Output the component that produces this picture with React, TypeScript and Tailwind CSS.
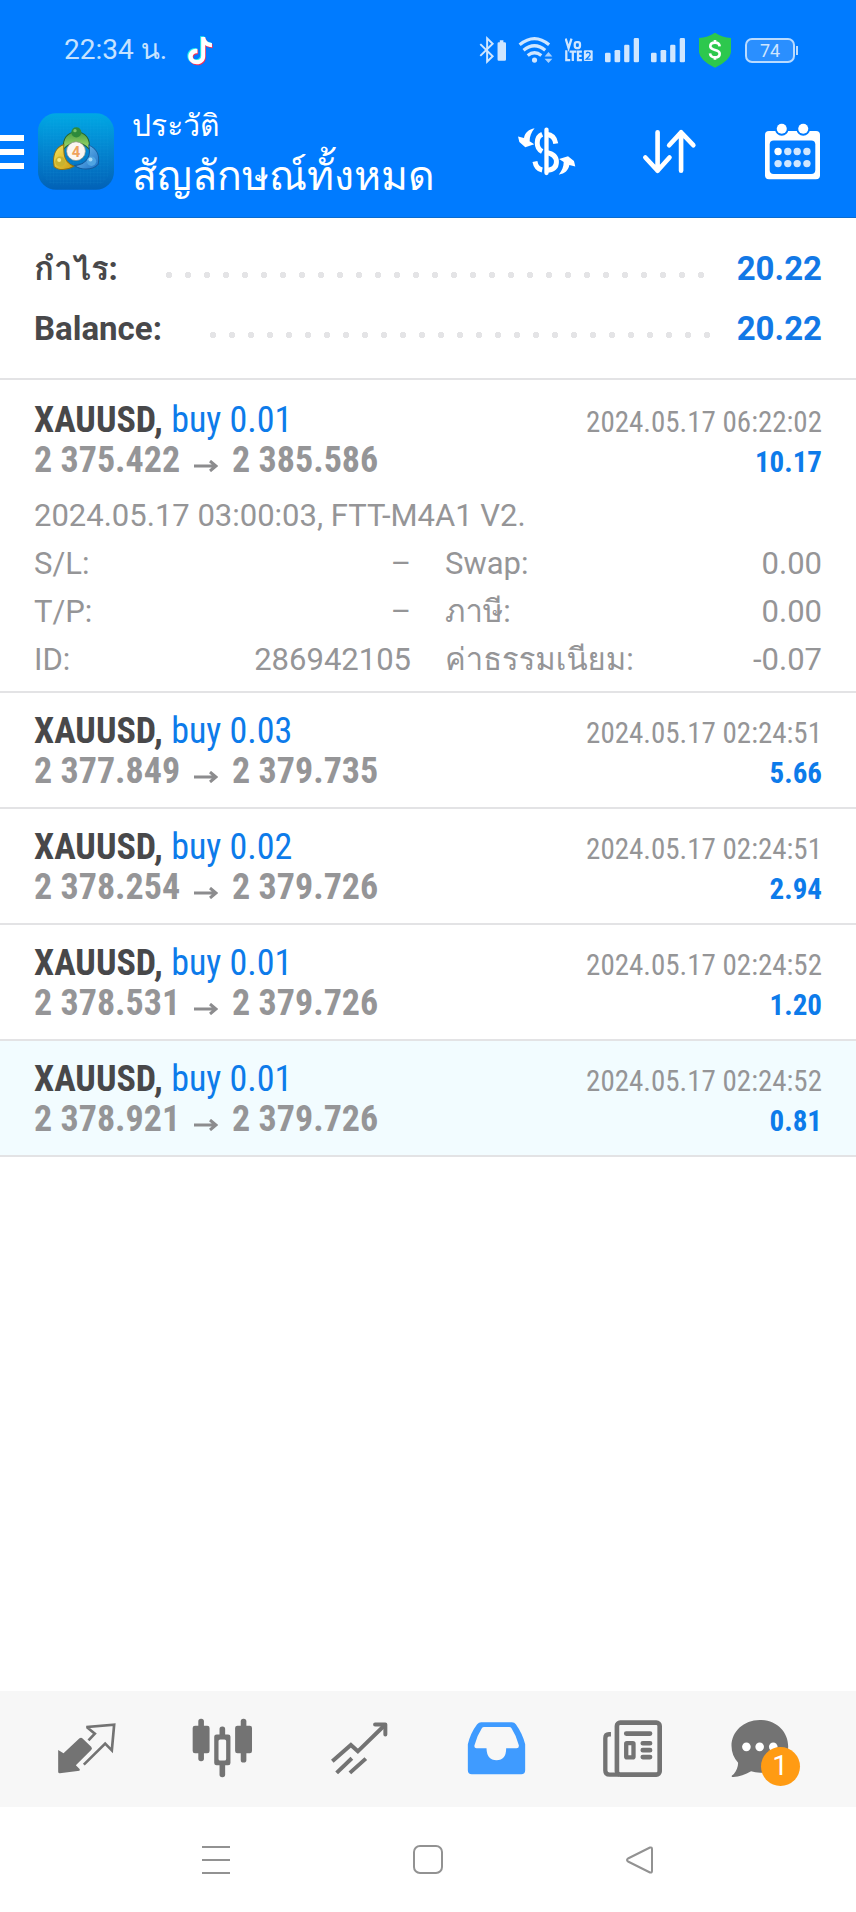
import type { ReactNode } from "react";

const CONDENSED = "font-['Roboto_Condensed','Liberation_Sans_Narrow',Roboto,sans-serif]";

type Trade = {
  symbol: string;
  side: string;
  open: string;
  close: string;
  time: string;
  profit: string;
  highlighted?: boolean;
  comment?: string;
  details?: { label: string; value: string }[];
};

const trades: Trade[] = [
  {
    symbol: "XAUUSD,",
    side: "buy 0.01",
    open: "2 375.422",
    close: "2 385.586",
    time: "2024.05.17 06:22:02",
    profit: "10.17",
    comment: "2024.05.17 03:00:03, FTT-M4A1 V2.",
    details: [
      { label: "S/L:", value: "–" },
      { label: "Swap:", value: "0.00" },
      { label: "T/P:", value: "–" },
      { label: "ภาษี:", value: "0.00" },
      { label: "ID:", value: "286942105" },
      { label: "ค่าธรรมเนียม:", value: "-0.07" },
    ],
  },
  { symbol: "XAUUSD,", side: "buy 0.03", open: "2 377.849", close: "2 379.735", time: "2024.05.17 02:24:51", profit: "5.66" },
  { symbol: "XAUUSD,", side: "buy 0.02", open: "2 378.254", close: "2 379.726", time: "2024.05.17 02:24:51", profit: "2.94" },
  { symbol: "XAUUSD,", side: "buy 0.01", open: "2 378.531", close: "2 379.726", time: "2024.05.17 02:24:52", profit: "1.20" },
  { symbol: "XAUUSD,", side: "buy 0.01", open: "2 378.921", close: "2 379.726", time: "2024.05.17 02:24:52", profit: "0.81", highlighted: true },
];

function TikTokIcon() {
  const note = "M602 108h12c1 10 8 17 20 18v12c-8 0-15-2-20-6v33c0 14-11 24-25 24s-25-10-25-23 11-24 27-23v13c-8-1-14 3-14 10 0 6 5 10 12 10 8 0 13-5 13-12z";
  return (
    <svg viewBox="560 102 80 92" className="h-[31px] w-[27px]" aria-hidden="true">
      <path d={note} fill="#25f4ee" transform="translate(-3 -2)" />
      <path d={note} fill="#fe2c55" transform="translate(2 3)" />
      <path d={note} fill="#fff" />
    </svg>
  );
}

function BluetoothIcon() {
  return (
    <svg viewBox="149 102 83 90" className="h-[30px] w-[27px]" aria-hidden="true">
      <path d="M153 129l38 37-17 17v-72l17 17-38 37" fill="none" stroke="#cfe6ff" strokeWidth="6" />
      <path d="M213 117h11v6h4q4 0 4 4v49q0 4-4 4h-18q-4 0-4-4v-49q0-4 4-4h3z" fill="#cfe6ff" />
    </svg>
  );
}

function WifiIcon() {
  return (
    <svg viewBox="266 102 108 88" className="h-[30px] w-[35px]" aria-hidden="true">
      <g fill="none" stroke="#cfe6ff" strokeWidth="10">
        <path d="M271 130q46-38 91 0" />
        <path d="M283 147q34-28 67 0" />
        <path d="M296 163q21-17 42 0" />
      </g>
      <circle cx="317" cy="177" r="8" fill="#cfe6ff" />
      <path d="M360 152l12 14h-24zM360 186l12-13h-24z" fill="#a5d0ff" />
    </svg>
  );
}

function VolteIcon() {
  return (
    <svg viewBox="407 106 86 82" className="h-[28px] w-[28px]" aria-hidden="true">
      <g fill="none" stroke="#cfe6ff" strokeWidth="7">
        <path d="M409 112l9 29 9-29" />
        <rect x="437" y="123" width="16" height="18" rx="6" />
        <path d="M411 148v30h12M421 152h21M431 152v29M459 152h-12v26h12M447 165h11" />
      </g>
      <rect x="465" y="148" width="27" height="33" rx="3" fill="#cfe6ff" />
      <path d="M472 158q2-5 7-4 6 1 5 7-1 4-12 14h14" fill="none" stroke="#007bff" strokeWidth="4" />
    </svg>
  );
}

function SignalIcon() {
  return (
    <svg viewBox="527 106 103 82" className="h-[28px] w-[34px]" fill="#cfe6ff" aria-hidden="true">
      <rect x="527" y="155" width="17" height="29" rx="4" />
      <rect x="556" y="147" width="17" height="37" rx="4" />
      <rect x="585" y="131" width="16" height="53" rx="4" />
      <rect x="614" y="111" width="16" height="73" rx="4" />
    </svg>
  );
}

function ShieldIcon() {
  return (
    <svg viewBox="801 94 108 108" className="h-9 w-9" aria-hidden="true">
      <path d="M855 96q22 14 48 16v43q-3 26-48 46-45-20-48-46v-43q26-2 48-16z" fill="#2dc84d" />
      <path d="M869 137c-1-8-7-11-14-11-8 0-14 4-14 11 0 15 28 7 28 22 0 7-6 11-14 11-9 0-14-5-15-12M855 118v11M855 167v10" fill="none" stroke="#fff" strokeWidth="8" />
    </svg>
  );
}

function BatteryStatus() {
  return (
    <div className="flex items-center gap-px">
      <div className="flex h-[25px] w-[50px] items-center justify-center rounded-[7px] border-2 border-[#b9dbff] bg-[#2a8fff] text-[18px] text-[#cfe6ff]">74</div>
      <div className="h-[9px] w-[2px] bg-[#b9dbff]" />
    </div>
  );
}

function AppLogo() {
  return (
    <svg viewBox="25 25 226 228" className="h-[77px] w-[76px] shrink-0" role="img" aria-label="MetaTrader 4">
      <defs>
        <linearGradient id="tile" x1="0" y1="0" x2="0" y2="1">
          <stop offset="0" stopColor="#00a8e4" />
          <stop offset="0.5" stopColor="#0383cf" />
          <stop offset="1" stopColor="#0261b6" />
        </linearGradient>
        <linearGradient id="green" x1="0" y1="0" x2="0" y2="1">
          <stop offset="0" stopColor="#4b9f45" />
          <stop offset="1" stopColor="#a4dc6c" />
        </linearGradient>
        <linearGradient id="yellow" x1="0" y1="0" x2="1" y2="1">
          <stop offset="0" stopColor="#f8e65c" />
          <stop offset="1" stopColor="#c99a12" />
        </linearGradient>
        <linearGradient id="blue" x1="0" y1="0" x2="1" y2="1">
          <stop offset="0" stopColor="#7cc5f2" />
          <stop offset="1" stopColor="#1c72c8" />
        </linearGradient>
        <pattern id="mesh" width="10" height="10" patternUnits="userSpaceOnUse">
          <path d="M0 0H10M0 0V10" stroke="#36b6ee" strokeOpacity="0.3" strokeWidth="1" />
        </pattern>
      </defs>
      <rect x="25" y="25" width="226" height="228" rx="54" fill="url(#tile)" />
      <rect x="40" y="40" width="196" height="198" rx="40" fill="url(#mesh)" />
      <path d="M101 132c-4-32 12-51 38-51s43 19 38 51c-12-14-27-19-38-19s-26 5-38 19z" fill="url(#green)" stroke="#25632f" strokeWidth="3" />
      <path d="M102 118c-24 8-35 32-29 66 12 12 39 12 59-1-17-7-27-20-29-35-1-10-2-20-1-30z" fill="url(#yellow)" stroke="#8c7013" strokeWidth="3" />
      <path d="M176 120c24 10 33 32 28 57-18 20-53 17-70 4 20-2 32-10 39-22 7-12 6-27 3-39z" fill="url(#blue)" stroke="#155a9c" strokeWidth="3" />
      <circle cx="139" cy="82" r="15" fill="#2d8a3c" />
      <circle cx="135" cy="77" r="5" fill="#7cc46c" />
      <circle cx="91" cy="169" r="15" fill="#c9b32f" />
      <circle cx="88" cy="164" r="6" fill="#f6ea86" />
      <circle cx="184" cy="168" r="14" fill="#4fa4e2" />
      <circle cx="181" cy="163" r="6" fill="#a8dcf8" />
      <circle cx="138" cy="138" r="28" fill="#fbf6f2" stroke="#8c8f80" strokeWidth="2" />
      <text x="138" y="154" textAnchor="middle" fontSize="44" fontWeight="700" fontFamily="Roboto, sans-serif" fill="#efa25c">4</text>
    </svg>
  );
}

function CurrencyIcon() {
  return (
    <svg viewBox="262 380 176 148" className="h-[49px] w-[59px]" aria-hidden="true">
      <g fill="none" stroke="#fff" strokeWidth="15">
        <path d="M337 402Q322 408 322 428Q322 446 337 454" />
        <path d="M337 510Q319 506 315 484" />
        <path d="M350 402Q374 404 378 430" />
        <path d="M350 457Q380 462 380 486Q380 510 350 511" />
        <path d="M350 388v131" strokeWidth="13" strokeLinecap="round" />
      </g>
      <path d="M314 384c-17 3-29 13-32 29l-18-4 4 16 18 16 27-9-14-9c0-14 5-27 15-39z" fill="#fff" />
      <path d="M387 524c19-3 29-13 32-29l18 4-4-16-18-15-27 9 14 9c0 14-5 26-15 38z" fill="#fff" />
    </svg>
  );
}

function SortIcon() {
  return (
    <svg viewBox="640 386 164 136" className="h-[45px] w-[55px]" fill="none" stroke="#fff" strokeWidth="14" strokeLinecap="round" strokeLinejoin="round" aria-hidden="true">
      <path d="M686 396v116M649 472l37 40 36-40" />
      <path d="M757 512V396M721 435l36-39 37 39" />
    </svg>
  );
}

function CalendarIcon() {
  return (
    <svg viewBox="1004 366 170 170" className="h-[57px] w-[57px]" aria-hidden="true">
      <rect x="1007" y="390" width="164" height="144" rx="12" fill="#fff" />
      <circle cx="1057" cy="384" r="20" fill="#007bff" />
      <circle cx="1121" cy="384" r="20" fill="#007bff" />
      <circle cx="1057" cy="383" r="15" fill="#fff" />
      <circle cx="1121" cy="383" r="15" fill="#fff" />
      <rect x="1021" y="418" width="136" height="100" rx="12" fill="#007bff" />
      <g fill="#cfe6ff">
        <circle cx="1046" cy="451" r="11" fill="#fff" />
        <circle cx="1075" cy="451" r="11" />
        <circle cx="1103" cy="451" r="11" />
        <circle cx="1132" cy="451" r="11" />
        <circle cx="1046" cy="487" r="11" />
        <circle cx="1075" cy="487" r="11" />
        <circle cx="1103" cy="487" r="11" />
        <circle cx="1132" cy="487" r="11" />
      </g>
    </svg>
  );
}

function QuotesIcon() {
  return (
    <svg viewBox="174 128 176 156" className="h-[52px] w-[59px]" aria-hidden="true">
      <path d="M177 212l16 10 48-45q5-4 10 1l25 24q5 5 0 10l-46 46 12 12-1 4-59 8q-5 0-5-5z" fill="#737373" />
      <path d="M268 183l19-20-22-18v-2l80-7-7 77-20-20-64 63" fill="none" stroke="#737373" strokeWidth="8" />
    </svg>
  );
}

function ChartIcon() {
  return (
    <svg viewBox="578 116 184 180" className="h-[60px] w-[61px]" fill="#737373" aria-hidden="true">
      <rect x="597" y="118" width="17" height="128" rx="8" />
      <rect x="580" y="139" width="51" height="83" rx="7" />
      <rect x="725" y="118" width="17" height="132" rx="8" />
      <rect x="708" y="139" width="51" height="83" rx="7" />
      <rect x="661" y="141" width="17" height="153" rx="8" />
      <rect x="645" y="165" width="49" height="93" rx="7" />
      <rect x="658" y="180" width="23" height="64" rx="5" fill="#f7f7f7" />
    </svg>
  );
}

function TradeIcon() {
  return (
    <svg viewBox="990 122 178 162" className="h-[54px] w-[59px]" fill="none" stroke="#737373" strokeWidth="12" aria-hidden="true">
      <path d="M997 243l56-49 21 19 80-78" />
      <path d="M1126 132h31v30" strokeLinecap="round" strokeLinejoin="round" />
      <path d="M1010 278l46-44M1050 278l48-43" />
    </svg>
  );
}

function HistoryIcon() {
  return (
    <svg viewBox="112 122 176 162" className="h-[54px] w-[59px]" aria-hidden="true">
      <path d="M142 132q5-6 12-6h92q8 0 12 6 20 28 28 60v78q0 12-12 12H126q-12 0-12-12v-78q8-34 28-60z" fill="#3f9bff" />
      <path d="M156 144q2-4 7-4h75q5 0 7 4 15 23 22 51 1 8-7 9h-31q0 36-29 36t-30-36h-30q-8-1-6-9 7-28 22-51z" fill="#f7f7f7" />
    </svg>
  );
}

function NewsIcon() {
  return (
    <svg viewBox="522 114 182 178" className="h-[59px] w-[61px]" fill="none" stroke="#737373" aria-hidden="true">
      <rect x="566" y="125" width="129" height="157" rx="10" strokeWidth="14" />
      <path d="M548 160h-6q-11 0-11 12v97q0 13 13 13h28" strokeWidth="13" />
      <path d="M594 158h72M644 187h22M644 208h22M644 229h22" strokeWidth="14" strokeLinecap="round" />
      <rect x="594" y="187" width="22" height="43" rx="2" strokeWidth="13" />
    </svg>
  );
}

function MessagesIcon() {
  return (
    <svg viewBox="902 114 174 178" className="h-[59px] w-[58px]" aria-hidden="true">
      <path d="M988 117c50 0 86 35 86 80s-37 79-84 79c-10 0-20-2-28-4-18 11-38 18-57 17-4-2 0-5 5-9 8-9 13-22 13-34-13-14-20-31-20-51 0-43 37-78 85-78z" fill="#737373" />
      <circle cx="948" cy="198" r="13" fill="#fff" />
      <circle cx="988" cy="198" r="13" fill="#fff" />
      <circle cx="1029" cy="198" r="13" fill="#fff" />
    </svg>
  );
}

function HeaderButton({ label, children }: { label: string; children: ReactNode }) {
  return (
    <button type="button" aria-label={label} className="flex h-20 w-[123px] items-center justify-center">
      {children}
    </button>
  );
}

function SummaryRow({ label, value }: { label: string; value: string }) {
  return (
    <div className="flex h-[60px] items-center text-[33px] font-bold">
      <span className="text-[#48484a]">{label}</span>
      <span className="mr-[26px] ml-12 mt-3 h-[6px] flex-1 bg-[radial-gradient(circle_at_3px_3px,#e4e4e6_3px,transparent_3px)] bg-[length:19px_6px] bg-repeat-x" />
      <span className="text-[#1278e6]">{value}</span>
    </div>
  );
}

function TradeRow({ trade }: { trade: Trade }) {
  return (
    <li className={`border-b-2 border-[#e3e3e5] px-[34px] ${trade.highlighted ? "bg-[#f2fcff]" : ""} ${trade.details ? "pt-[20px]" : "pt-[18px]"}`}>
      <div className={`flex justify-between ${CONDENSED}`}>
        <div className="text-[36px] leading-[40px]">
          <div>
            <span className="font-bold text-[#48484a]">{trade.symbol}</span> <span className="text-[#0d7bea]">{trade.side}</span>
          </div>
          <div className="flex items-center font-bold text-[#959597]">
            {trade.open}
            <svg viewBox="0 0 24 12" className="mx-[14px] mt-3 h-3 w-6" fill="none" stroke="#8c8c8e" strokeWidth="3" aria-hidden="true">
              <path d="M0 6h22M16 1l6 5-6 5" />
            </svg>
            {trade.close}
          </div>
        </div>
        <div className="pt-[2px] text-right text-[29px] leading-[40px]">
          <div className="text-[#959597]">{trade.time}</div>
          <div className="font-bold text-[#0d7bea]">{trade.profit}</div>
        </div>
      </div>
      {trade.details ? (
        <div className="pt-[10px] pb-[7px] text-[31px] leading-[48px] text-[#959597]">
          <p>{trade.comment}</p>
          <dl className="grid grid-cols-2 gap-x-[34px]">
            {trade.details.map((item) => (
              <div key={item.label} className="flex justify-between">
                <dt>{item.label}</dt>
                <dd>{item.value}</dd>
              </div>
            ))}
          </dl>
        </div>
      ) : (
        <div className="h-[14px]" />
      )}
    </li>
  );
}

export default function App() {
  return (
    <div className="flex min-h-screen flex-col bg-white font-[Roboto,Loma,'Noto_Sans_Thai_Looped','Noto_Sans',sans-serif]">
      <header className="border-b border-[#0a6cd0] bg-[#007bff] pb-[14px] text-white">
        <div className="flex h-[100px] items-center justify-between pr-[58px] pl-16">
          <div className="flex items-center gap-5 text-[28px] text-[#c5e2ff]">
            <span>22:34 น.</span>
            <TikTokIcon />
          </div>
          <div className="flex items-center gap-3">
            <BluetoothIcon />
            <WifiIcon />
            <VolteIcon />
            <SignalIcon />
            <SignalIcon />
            <ShieldIcon />
            <BatteryStatus />
          </div>
        </div>
        <div className="flex h-[103px] items-center pr-[2px]">
          <button type="button" aria-label="Menu" className="mr-[14px] flex w-6 flex-col gap-2">
            <span className="h-[6px] bg-white" />
            <span className="h-[6px] bg-white" />
            <span className="h-[6px] bg-white" />
          </button>
          <AppLogo />
          <div className="ml-[18px] flex-1">
            <p className="text-[30px] leading-[48px]">ประวัติ</p>
            <h1 className="text-[41px] leading-[52px]">สัญลักษณ์ทั้งหมด</h1>
          </div>
          <HeaderButton label="Symbol">
            <CurrencyIcon />
          </HeaderButton>
          <HeaderButton label="Sort">
            <SortIcon />
          </HeaderButton>
          <HeaderButton label="Period">
            <CalendarIcon />
          </HeaderButton>
        </div>
      </header>

      <main className="flex-1">
        <section className="border-b-2 border-[#e3e3e5] px-[34px] pt-[21px] pb-[19px]">
          <SummaryRow label="กำไร:" value="20.22" />
          <SummaryRow label="Balance:" value="20.22" />
        </section>
        <ul>
          {trades.map((trade) => (
            <TradeRow key={trade.open} trade={trade} />
          ))}
        </ul>
      </main>

      <nav className="grid h-[116px] grid-cols-6 bg-[#f7f7f7] px-[18px] pb-[2px]">
        <button type="button" aria-label="Quotes" className="flex items-center justify-center">
          <QuotesIcon />
        </button>
        <button type="button" aria-label="Chart" className="flex items-center justify-center">
          <ChartIcon />
        </button>
        <button type="button" aria-label="Trade" className="flex items-center justify-center">
          <TradeIcon />
        </button>
        <button type="button" aria-label="History" className="flex items-center justify-center">
          <HistoryIcon />
        </button>
        <button type="button" aria-label="News" className="flex items-center justify-center">
          <NewsIcon />
        </button>
        <button type="button" aria-label="Messages" className="flex items-center justify-center">
          <span className="relative mr-5">
            <MessagesIcon />
            <span className="absolute -right-[11px] -bottom-2 flex size-[39px] items-center justify-center rounded-full bg-[#ff9b13] text-[28px] text-white">1</span>
          </span>
        </button>
      </nav>

      <div className="grid h-[105px] grid-cols-3 px-[110px]">
        <button type="button" aria-label="Recent apps" className="flex items-center justify-center">
          <svg viewBox="0 0 30 30" className="size-[30px]" stroke="#929292" strokeWidth="2" aria-hidden="true">
            <path d="M1 2h28M1 15h28M1 28h28" />
          </svg>
        </button>
        <button type="button" aria-label="Home" className="flex items-center justify-center">
          <svg viewBox="0 0 30 30" className="size-[30px]" fill="none" stroke="#929292" strokeWidth="2" aria-hidden="true">
            <rect x="1" y="1" width="28" height="27" rx="6" />
          </svg>
        </button>
        <button type="button" aria-label="Back" className="flex items-center justify-center">
          <svg viewBox="0 0 30 30" className="size-[30px]" fill="none" stroke="#929292" strokeWidth="2" strokeLinejoin="round" aria-hidden="true">
            <path d="M3 13.500Q1 15 3 16.500L25 27.500Q27 28 27 26V4Q27 2 25 2.500Z" />
          </svg>
        </button>
      </div>
    </div>
  );
}
